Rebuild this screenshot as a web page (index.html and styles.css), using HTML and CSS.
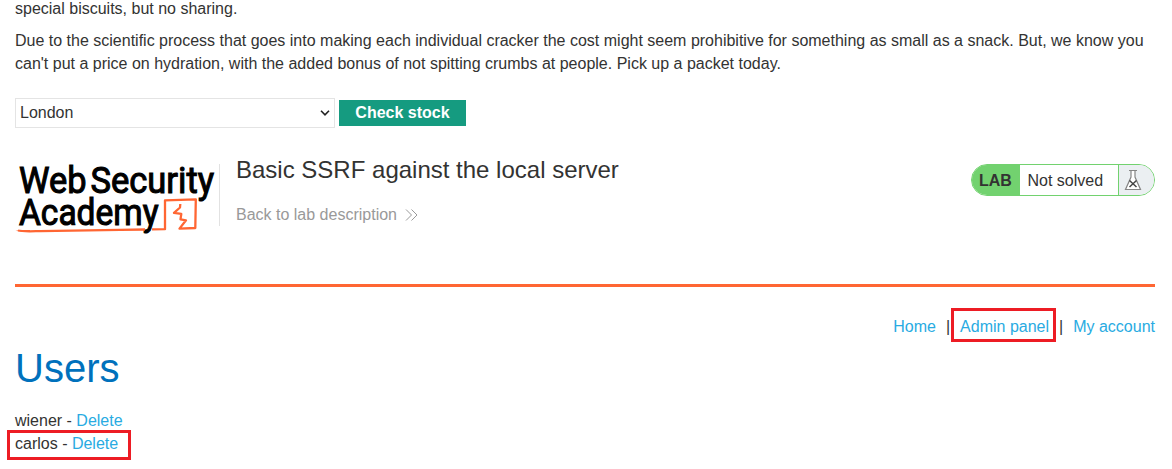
FILE: index.html
```
<!DOCTYPE html>
<html lang="en">
<head>
<meta charset="utf-8">
<title>Basic SSRF against the local server</title>
<link rel="stylesheet" href="styles.css">
</head>
<body>
<main class="page">
  <section class="product">
    <p>special biscuits, but no sharing.</p>
    <p>Due to the scientific process that goes into making each individual cracker the cost might seem prohibitive for something as small as a snack. But, we know you can't put a price on hydration, with the added bonus of not spitting crumbs at people. Pick up a packet today.</p>
  </section>
  <form class="stock">
    <div class="select"><span>London</span>
      <svg width="10" height="6" viewBox="0 0 10 6"><path d="M1 .8 5 4.8 9 .8" fill="none" stroke="#222" stroke-width="1.6"/></svg>
    </div>
    <button type="button" class="button">Check stock</button>
  </form>
  <header class="lab-header">
    <svg class="logo" width="204" height="75" viewBox="15 161 204 75">
      <g class="logo-text">
        <text x="19" y="192.500" textLength="67.500" lengthAdjust="spacingAndGlyphs">Web</text>
        <text x="90.500" y="192.500" textLength="123.500" lengthAdjust="spacingAndGlyphs">Security</text>
        <text x="19" y="225" textLength="139.500" lengthAdjust="spacingAndGlyphs">Academy</text>
      </g>
      <g class="logo-line">
        <path d="M18 230.500 C22 231.700 30 231.300 40 231.100 L120 229.900 L145 229.500 M152 229.300 L165 229.200 L165 200.300 L195.800 199.400 L195.300 228 L179.500 228.600 L186 220.300 L180.500 219.300 L181.300 213.800 L174 212.800 L180 207.500 L180.300 204"/>
        <path class="tip" d="M15.500 230 L30 230 V231.700 L22 231.700Z"/>
      </g>
    </svg>
    <div class="title">
      <h2>Basic SSRF against the local server</h2>
      <a class="back">Back to lab description
        <svg width="13" height="12" viewBox="0 0 13 12"><path d="M1 .5 6.500 6 1 11.500 M6.500 .5 12 6 6.500 11.500" fill="none" stroke="#9a9a9a" stroke-width="1"/></svg>
      </a>
    </div>
    <div class="status">
      <span class="status-tag">LAB</span>
      <span class="status-text">Not solved</span>
      <span class="status-icon">
        <svg width="18" height="22" viewBox="0 0 18 22"><path d="M5 1.500H13M7 1.500V8L1.500 20.500H16.500L11 8V1.500" fill="#fff" stroke="#858585" stroke-width="1.200"/><path d="M5.500 11.500 12.500 18M12.500 11.500 5.500 18" stroke="#444" stroke-width="1.500"/></svg>
      </span>
    </div>
  </header>
  <nav class="links">
    <a>Home</a><span class="bar">|</span><a class="marked">Admin panel</a><span class="bar">|</span><a>My account</a>
  </nav>
  <h1>Users</h1>
  <div class="user">wiener - <a>Delete</a></div>
  <div class="user"><span class="marked user-mark">carlos - <a>Delete</a></span></div>
</main>
</body>
</html>
```
FILE: styles.css
```
* { box-sizing: border-box; }
body {
  margin: 0;
  background: #fff;
  color: #333332;
  font: 16px/23px "Liberation Sans", Arial, sans-serif;
}
a { color: #29abe2; }
.page { display: flow-root; height: 469px; padding: 0 17px 0 15px; overflow: hidden; }
.product { margin-top: -3px; }
.product p { margin: 0 0 9px; }
.stock {
  display: flex;
  align-items: flex-start;
  gap: 4px;
  margin-top: 23px;
  height: 30px;
}
.select {
  display: flex;
  align-items: center;
  justify-content: space-between;
  width: 320px;
  height: 30px;
  padding: 0 4px;
  border: 1px solid #e4e4e4;
}
.select span { line-height: 22px; }
.button {
  width: 127px;
  height: 26px;
  margin: 2px 0 0;
  padding: 0;
  border: 0;
  background: #159b80;
  color: #fff;
  font: bold 16px/26px "Liberation Sans", Arial, sans-serif;
}
.lab-header {
  display: flex;
  align-items: flex-start;
  height: 159px;
  padding-top: 33px;
  border-bottom: 3px solid #ff6633;
}
.logo { display: block; flex: none; overflow: visible; }
.logo-text text {
  font: 400 37.5px Roboto, "Open Sans", sans-serif;
  fill: #000;
  stroke: #000;
  stroke-width: 1.1px;
}
.logo-line { fill: none; stroke: #ff6633; stroke-width: 2.3px; stroke-linejoin: round; }
.logo-line .tip { fill: #ff6633; stroke: none; }
.title {
  height: 62px;
  margin-top: 3px;
  padding-left: 16px;
  border-left: 1px solid #e2e2e2;
}
h2 { margin: -8px 0 0; font-size: 24px; font-weight: 400; line-height: 28px; }
.back { display: flex; align-items: center; gap: 8px; margin-top: 19px; color: #999; }
.status {
  display: flex;
  width: 184px;
  height: 32px;
  margin: 3px 0 0 auto;
  overflow: hidden;
  border: 1px solid #72d26f;
  border-radius: 16px;
  line-height: 31px;
}
.status-tag { width: 48px; padding-left: 7px; background: #72d26f; font-weight: bold; }
.status-text { flex: 1; padding-left: 7.500px; }
.status-icon { width: 36.500px; padding: 4px 0 0 5.500px; border-left: 1px solid #72d26f; background: #ebeff2; }
.status-icon svg { display: block; }
.links { display: flex; justify-content: flex-end; margin-top: 28px; }
.bar { margin: 0 10px; }
.marked { position: relative; }
.marked::after {
  content: "";
  position: absolute;
  inset: -7px -7px -4px -9px;
  border: 3px solid #ed1c24;
}
.user-mark { display: inline-block; }
.user-mark::after { inset: -2px -13px -5px -8px; }
h1 { margin: 8px 0 19px; color: #0071bc; font-size: 40px; font-weight: 400; line-height: 44px; }
```
